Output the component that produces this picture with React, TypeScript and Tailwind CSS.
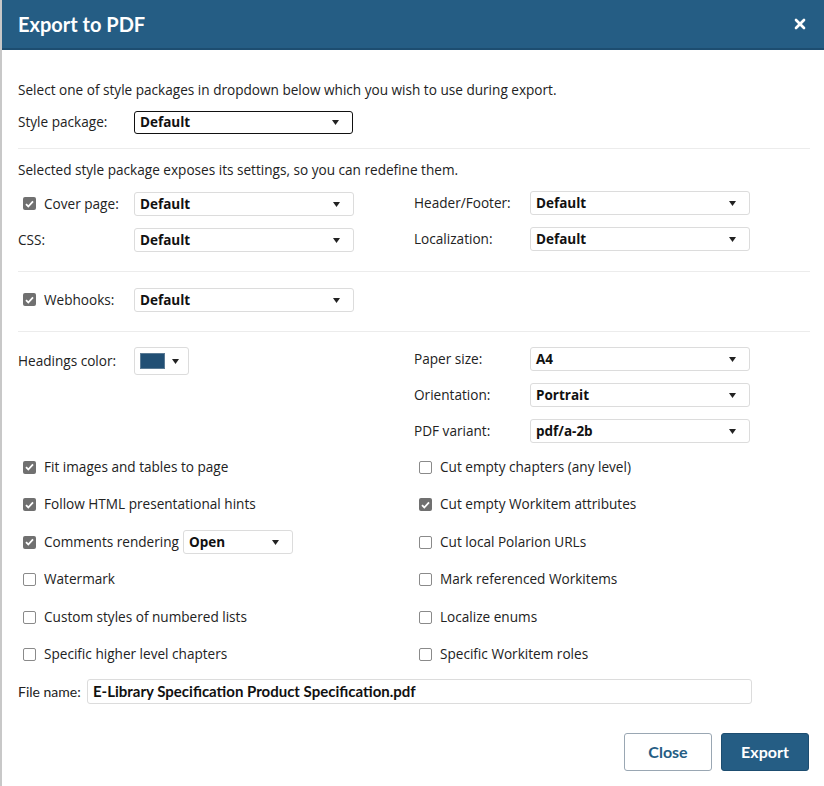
import { X } from "lucide-react";

function Caret() {
    return (
        <svg width="7" height="5" viewBox="0 0 7 5" className="shrink-0">
            <path d="M0 0h7L3.5 5z" fill="#222" />
        </svg>
    );
}

function Select({ value, className = "", strong = false }: { value: string; className?: string; strong?: boolean }) {
    return (
        <div
            className={`flex items-center justify-between pl-[5px] pr-[13px] bg-white rounded-[3px] ${
                strong ? "border-[1.5px] border-[#111]" : "border border-[#dcdcdc]"
            } ${className}`}
        >
            <span className="text-[13.5px] font-bold text-[#111]">{value}</span>
            <Caret />
        </div>
    );
}

function Check({ checked }: { checked: boolean }) {
    if (checked) {
        return (
            <span className="w-[13px] h-[13px] rounded-[2px] bg-[#707070] flex items-center justify-center shrink-0">
                <svg width="9" height="8" viewBox="0 0 9 8">
                    <path d="M1 4.2l2.3 2.3L8 1.3" stroke="#fff" strokeWidth="1.8" fill="none" />
                </svg>
            </span>
        );
    }
    return <span className="w-[13px] h-[13px] rounded-[2px] border border-[#8a8a8a] bg-white shrink-0" />;
}

function CheckRow({ label, checked, children }: { label: string; checked: boolean; children?: React.ReactNode }) {
    return (
        <div className="flex items-center h-[24px] pl-[5px]">
            <Check checked={checked} />
            <span className="ml-[8px]">{label}</span>
            {children}
        </div>
    );
}

function Field({ label, value, check }: { label: string; value: string; check?: boolean }) {
    return (
        <div className="flex items-center h-[24px]">
            <div className="w-[116px] flex items-center shrink-0">
                {check !== undefined && (
                    <>
                        <span className="ml-[5px]">
                            <Check checked={check} />
                        </span>
                        <span className="ml-[8px]">{label}</span>
                    </>
                )}
                {check === undefined && <span>{label}</span>}
            </div>
            <Select value={value} className="w-[220px] h-[24px]" />
        </div>
    );
}

const Divider = () => <div className="h-px bg-[#ececec]" />;

export default function App() {
    return (
        <div
            className="w-[824px] h-[786px] bg-white border-l-2 border-[#c8c8c8] text-[13.6px] text-[#222] overflow-hidden"
            style={{ fontFamily: "'Open Sans', sans-serif" }}
        >
            <div className="h-[50px] bg-[#255d84] border-b-2 border-[#1d4d70] flex items-center justify-between pl-[16px] pr-[16px]">
                <span className="text-white text-[20px] font-bold" style={{ fontFamily: "Lato, sans-serif" }}>
                    Export to PDF
                </span>
                <X className="w-[16px] h-[16px] text-white" strokeWidth={4} />
            </div>

            <div className="pl-[16px] pr-[14px] pt-[30px]">
                <div className="h-[20px] flex items-center">
                    Select one of style packages in dropdown below which you wish to use during export.
                </div>
                <div className="flex items-center h-[23px] mt-[11px]">
                    <span className="w-[116px]">Style package:</span>
                    <Select value="Default" strong className="w-[219px] h-[23px]" />
                </div>
                <div className="mt-[14px]">
                    <Divider />
                </div>
                <div className="h-[20px] flex items-center mt-[11px]">
                    Selected style package exposes its settings, so you can redefine them.
                </div>

                <div className="grid grid-cols-[396px_1fr] gap-y-[12px] mt-[12px]">
                    <Field label="Cover page:" value="Default" check />
                    <div className="-mt-px">
                        <Field label="Header/Footer:" value="Default" />
                    </div>
                    <Field label="CSS:" value="Default" />
                    <div className="-mt-px">
                        <Field label="Localization:" value="Default" />
                    </div>
                </div>

                <div className="mt-[19px]">
                    <Divider />
                </div>
                <div className="mt-[16px]">
                    <Field label="Webhooks:" value="Default" check />
                </div>
                <div className="mt-[19px]">
                    <Divider />
                </div>

                <div className="grid grid-cols-[396px_1fr] mt-[15px]">
                    <div className="flex items-center h-[28px]">
                        <span className="w-[116px]">Headings color:</span>
                        <div className="w-[55px] h-[28px] border border-[#dcdcdc] rounded-[3px] flex items-center pl-[5px] gap-[7px]">
                            <span className="w-[25px] h-[16px] bg-[#214f74] border border-[#5a7a94]" />
                            <Caret />
                        </div>
                    </div>
                    <div className="flex flex-col gap-[12px]">
                        <Field label="Paper size:" value="A4" />
                        <Field label="Orientation:" value="Portrait" />
                        <Field label="PDF variant:" value="pdf/a-2b" />
                    </div>
                </div>

                <div className="grid grid-cols-[396px_1fr] gap-y-[13.5px] mt-[12px]">
                    <CheckRow label="Fit images and tables to page" checked />
                    <CheckRow label="Cut empty chapters (any level)" checked={false} />
                    <CheckRow label="Follow HTML presentational hints" checked />
                    <CheckRow label="Cut empty Workitem attributes" checked />
                    <CheckRow label="Comments rendering" checked>
                        <Select value="Open" className="w-[110px] h-[24px] ml-[4px]" />
                    </CheckRow>
                    <CheckRow label="Cut local Polarion URLs" checked={false} />
                    <CheckRow label="Watermark" checked={false} />
                    <CheckRow label="Mark referenced Workitems" checked={false} />
                    <CheckRow label="Custom styles of numbered lists" checked={false} />
                    <CheckRow label="Localize enums" checked={false} />
                    <CheckRow label="Specific higher level chapters" checked={false} />
                    <CheckRow label="Specific Workitem roles" checked={false} />
                </div>

                <div className="flex items-center h-[25px] mt-[12px]" style={{ fontFamily: "Lato, sans-serif" }}>
                    <span className="w-[69px] text-[14px]">File name:</span>
                    <div className="w-[665px] h-[25px] border border-[#dcdcdc] rounded-[3px] flex items-center pl-[5px] text-[15px] font-bold text-[#111]">
                        E-Library Specification Product Specification.pdf
                    </div>
                </div>

                <div className="flex justify-end gap-[9px] mt-[29px] pr-px" style={{ fontFamily: "Lato, sans-serif" }}>
                    <button className="w-[88px] h-[38px] border border-[#9aa7b3] rounded-[3px] bg-white text-[#255d84] text-[16px] font-bold">
                        Close
                    </button>
                    <button className="w-[88px] h-[38px] rounded-[3px] bg-[#255d84] border border-[#1d4d70] text-white text-[16px] font-bold">
                        Export
                    </button>
                </div>
            </div>
        </div>
    );
}
